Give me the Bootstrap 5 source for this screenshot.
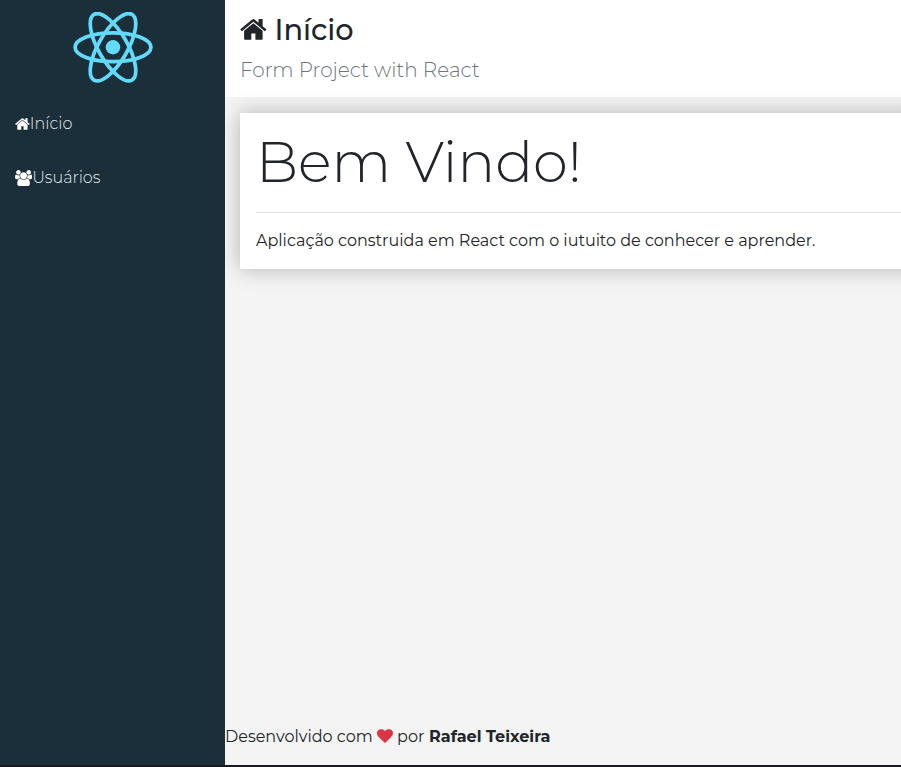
<!DOCTYPE html>
<html lang="pt-BR">
<head>
<meta charset="utf-8">
<meta name="viewport" content="width=device-width, initial-scale=1">
<title>Início</title>
<link rel="stylesheet" href="https://cdn.jsdelivr.net/npm/bootstrap@5.3.0/dist/css/bootstrap.min.css">
<style>
body { font-family: Montserrat, Inter, "Open Sans", sans-serif; color: #212529; background: #17191c; }
.app-shell { height: 765px; background: #f4f4f4; }
.app-side { width: 225px; background: #1b2f3a; }
.app-logo { width: 80px; height: 70.5px; }
.app-menu { padding-top: 14.5px; }
.app-menu a { color: #e4e8ea; font-weight: 300; height: 54px; padding-left: 15px; }
.app-menu .fa-glyph { fill: #fff; margin-bottom: 1px; }
.app-head { height: 97px; padding: 12px 0 0 15px; }
.app-main { padding: 16px 0 0 15px; }
.fa-glyph { height: 1em; width: auto; fill: currentColor; vertical-align: -.143em; }
.head-title { font-size: 28.8px; line-height: 35px; font-weight: 500; }
.head-sub { font-size: 20px; font-weight: 300; color: #6c757d; padding-top: 8px; }
.panel { height: 156px; margin-right: -16px; box-shadow: 0 0 20px rgba(0,0,0,.27); }
.hero-text { font-size: 56px; font-weight: 300; line-height: 67px; }
.panel hr { color: #000; opacity: .1; }
.author { margin-left: .5px; }
</style>
</head>
<body>
<div class="app-shell d-flex overflow-hidden">
  <aside class="app-side flex-shrink-0 position-relative z-1">
    <div class="d-flex justify-content-center pt-2 mt-1">
      <svg class="app-logo" viewBox="-11.5 -10.23 23 20.46" fill="none" stroke="#61dafb" stroke-width="1.08"><circle r="2.1" fill="#61dafb" stroke="none"/><ellipse rx="11" ry="4.2"/><ellipse rx="11" ry="4.2" transform="rotate(60)"/><ellipse rx="11" ry="4.2" transform="rotate(120)"/></svg>
    </div>
    <nav class="app-menu d-flex flex-column">
      <a href="#" class="d-flex align-items-center text-decoration-none"><svg class="fa-glyph" viewBox="64 0 1664 1792"><path d="M1472 992v480q0 26-19 45t-45 19h-384v-384h-256v384h-384q-26 0-45-19t-19-45v-480q0-1 .5-3t.5-3l575-474 575 474q1 2 1 6zm223-69l-62 74q-8 9-21 11h-3q-13 0-21-7l-692-577-692 577q-12 8-24 7-13-2-21-11l-62-74q-8-10-7-23.500t11-21.500l719-599q32-26 76-26t76 26l244 204v-195q0-14 9-23t23-9h192q14 0 23 9t9 23v408l219 182q10 8 11 21.500t-7 23.500z"/></svg><span>Início</span></a>
      <a href="#" class="d-flex align-items-center text-decoration-none"><svg class="fa-glyph" viewBox="64 0 1920 1792"><path d="M657 896q-162 5-265 128h-134q-82 0-138-40.500t-56-118.500q0-353 124-353 6 0 43.500 21t97.500 42.500 119 21.500q67 0 133-23-5 37-5 66 0 159 81 256zm1071 637q0 120-73 189.500t-194 69.500h-874q-121 0-194-69.500t-73-189.500q0-53 3.500-103.500t14-109 26.500-108.500 43-97.500 62-81 85.500-53.500 111.500-20q10 0 43 21.500t73 48 107 48 135 21.500 135-21.500 107-48 73-48 43-21.500q61 0 111.500 20t85.500 53.500 62 81 43 97.500 26.500 108.500 14 109 3.500 103.500zm-1024-1277q0 106-75 181t-181 75-181-75-75-181 75-181 181-75 181 75 75 181zm704 384q0 159-112.500 271.500t-271.500 112.500-271.500-112.500-112.500-271.500 112.500-271.500 271.500-112.500 271.500 112.500 112.500 271.500zm576 225q0 78-56 118.500t-138 40.500h-134q-103-123-265-128 81-97 81-256 0-29-5-66 66 23 133 23 59 0 119-21.500t97.500-42.500 43.500-21q124 0 124 353zm-128-609q0 106-75 181t-181 75-181-75-75-181 75-181 181-75 181 75 75 181z"/></svg><span>Usuários</span></a>
    </nav>
  </aside>
  <div class="d-flex flex-column flex-grow-1">
    <header class="app-head bg-white flex-shrink-0">
      <h1 class="head-title mb-0"><svg class="fa-glyph" viewBox="64 0 1664 1792"><path d="M1472 992v480q0 26-19 45t-45 19h-384v-384h-256v384h-384q-26 0-45-19t-19-45v-480q0-1 .5-3t.5-3l575-474 575 474q1 2 1 6zm223-69l-62 74q-8 9-21 11h-3q-13 0-21-7l-692-577-692 577q-12 8-24 7-13-2-21-11l-62-74q-8-10-7-23.500t11-21.500l719-599q32-26 76-26t76 26l244 204v-195q0-14 9-23t23-9h192q14 0 23 9t9 23v408l219 182q10 8 11 21.500t-7 23.500z"/></svg> Início</h1>
      <p class="head-sub mb-0">Form Project with React</p>
    </header>
    <main class="app-main flex-grow-1">
      <div class="panel bg-white p-3">
        <div class="hero-text">Bem Vindo!</div>
        <hr class="my-3">
        <p class="mb-0">Aplicação construida em React com o iutuito de conhecer e aprender.</p>
      </div>
    </main>
    <footer class="pb-3">Desenvolvido com <svg class="fa-glyph text-danger" viewBox="0 0 1792 1792"><path d="M896 1664q-26 0-44-18l-624-602q-10-8-27.500-26t-55.500-65.500-68-97.500-53.500-121-23.500-138q0-220 127-344t351-124q62 0 126.500 21.500t120 58 95.500 68.500 76 68q36-36 76-68t95.500-68.500 120-58 126.500-21.500q224 0 351 124t127 344q0 221-229 450l-623 600q-18 18-44 18z"/></svg> por <strong class="author">Rafael Teixeira</strong></footer>
  </div>
</div>
<script src="https://cdn.jsdelivr.net/npm/bootstrap@5.3.0/dist/js/bootstrap.bundle.min.js"></script>
</body>
</html>
